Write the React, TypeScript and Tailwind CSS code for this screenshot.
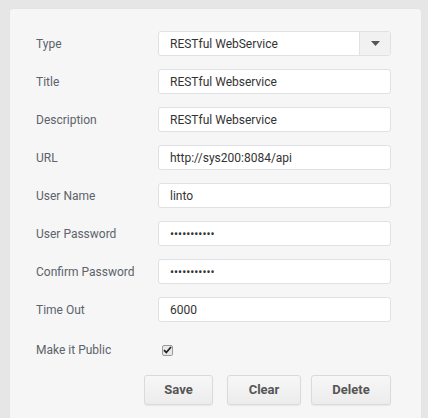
import { useState } from "react";

const font = { fontFamily: "Roboto, 'Liberation Sans', sans-serif" };

function Field({ label, children }: { label: string; children: React.ReactNode }) {
  return (
    <div className="flex items-center h-[25px] mb-[13px]">
      <label className="w-[122px] shrink-0 text-[12px] text-[#5d626b]">{label}</label>
      {children}
    </div>
  );
}

function TextBox({ value, type = "text" }: { value: string; type?: string }) {
  return (
    <input
      type={type}
      defaultValue={value}
      className="w-[233px] h-[25px] rounded-[3px] border border-[#dfe1e5] bg-white px-[11px] text-[12px] text-[#333] outline-none"
    />
  );
}

const btn =
  "h-[30px] rounded-[3px] border border-[#dadada] bg-gradient-to-b from-[#f7f7f7] to-[#ececec] text-[13px] font-bold text-[#555] shadow-[0_1px_1px_rgba(0,0,0,0.06)]";

export default function App() {
  const [pub, setPub] = useState(true);
  return (
    <div className="w-[428px] h-[418px] bg-[#e6e6e6] pt-[9px] pl-[10px] overflow-hidden" style={font}>
      <div className="w-[411px] h-[420px] rounded-[3px] bg-[#f6f6f6] pt-[22px] pl-[26px] shadow-[0_0_1px_rgba(0,0,0,0.08)]">
        <Field label="Type">
          <div className="flex w-[233px] h-[25px] rounded-[3px] border border-[#dfe1e5] bg-white">
            <div className="flex-1 flex items-center px-[11px] text-[12px] text-[#333]">RESTful WebService</div>
            <div className="w-[31px] flex items-center justify-center border-l border-[#dfe1e5] bg-[#f1f1f1] rounded-r-[3px]">
              <svg width="9" height="5" viewBox="0 0 9 5">
                <path d="M0 0 H9 L4.5 5 Z" fill="#555" />
              </svg>
            </div>
          </div>
        </Field>
        <Field label="Title">
          <TextBox value="RESTful Webservice" />
        </Field>
        <Field label="Description">
          <TextBox value="RESTful Webservice" />
        </Field>
        <Field label="URL">
          <TextBox value="http://sys200:8084/api" />
        </Field>
        <Field label="User Name">
          <TextBox value="linto" />
        </Field>
        <Field label="User Password">
          <TextBox value="12345678901" type="password" />
        </Field>
        <Field label="Confirm Password">
          <TextBox value="12345678901" type="password" />
        </Field>
        <Field label="Time Out">
          <TextBox value="6000" />
        </Field>
        <div className="flex items-center h-[20px] mt-[18px]">
          <label className="w-[126px] shrink-0 text-[12px] text-[#5d626b]">Make it Public</label>
          <button
            onClick={() => setPub(!pub)}
            className="w-[11px] h-[11px] rounded-[2px] border border-[#9a9a9a] bg-[#e9e9e9] flex items-center justify-center"
          >
            {pub && (
              <svg width="9" height="8" viewBox="0 0 9 8">
                <path d="M1 4.2 L3.3 6.5 L8 1" stroke="#222" strokeWidth="1.8" fill="none" />
              </svg>
            )}
          </button>
        </div>
        <div className="flex ml-[108px] mt-[15px]">
          <button className={`${btn} w-[69px]`}>Save</button>
          <button className={`${btn} w-[74px] ml-[14px]`}>Clear</button>
          <button className={`${btn} w-[80px] ml-[10px]`}>Delete</button>
        </div>
      </div>
    </div>
  );
}
